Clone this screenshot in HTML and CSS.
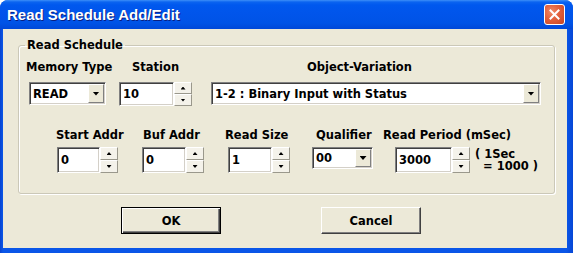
FILE: index.html
```html
<!DOCTYPE html>
<html lang="en">
<head>
  <meta charset="UTF-8">
  <title>Read Schedule Add/Edit</title>
  <link rel="stylesheet" href="styles.css">
</head>
<body>
  <div class="window">
    <!-- Title bar -->
    <div class="titlebar">
      <span class="title">Read Schedule Add/Edit</span>
      <button class="close-btn" aria-label="Close">
        <svg width="11" height="11" viewBox="0 0 11 11">
          <path d="M1.5 1.5 L9.5 9.5 M9.5 1.5 L1.5 9.5" stroke="#fff" stroke-width="2" stroke-linecap="square"/>
        </svg>
      </button>
    </div>

    <div class="client">
      <fieldset class="group">
        <legend>Read Schedule</legend>

        <!-- Row 1 -->
        <div class="row row-top">
          <div class="field f-mem">
            <label>Memory Type</label>
            <div class="combo combo-mem">
              <span class="combo-text">READ</span>
              <span class="drop-btn"><span class="arrow-down"></span></span>
            </div>
          </div>

          <div class="field f-station">
            <label>Station</label>
            <div class="spin-edit">
              <div class="edit edit-station">10</div>
              <div class="spin">
                <span class="spin-btn"><span class="arrow-up"></span></span>
                <span class="spin-btn"><span class="arrow-dn"></span></span>
              </div>
            </div>
          </div>

          <div class="field f-objvar">
            <label>Object-Variation</label>
            <div class="combo combo-objvar">
              <span class="combo-text">1-2 : Binary Input with Status</span>
              <span class="drop-btn"><span class="arrow-down"></span></span>
            </div>
          </div>
        </div>

        <!-- Row 2 -->
        <div class="row row-bottom">
          <div class="field f-start">
            <label>Start Addr</label>
            <div class="spin-edit">
              <div class="edit edit-43">0</div>
              <div class="spin">
                <span class="spin-btn"><span class="arrow-up"></span></span>
                <span class="spin-btn"><span class="arrow-dn"></span></span>
              </div>
            </div>
          </div>

          <div class="field f-buf">
            <label>Buf Addr</label>
            <div class="spin-edit">
              <div class="edit edit-44">0</div>
              <div class="spin">
                <span class="spin-btn"><span class="arrow-up"></span></span>
                <span class="spin-btn"><span class="arrow-dn"></span></span>
              </div>
            </div>
          </div>

          <div class="field f-size">
            <label>Read Size</label>
            <div class="spin-edit">
              <div class="edit edit-44">1</div>
              <div class="spin">
                <span class="spin-btn"><span class="arrow-up"></span></span>
                <span class="spin-btn"><span class="arrow-dn"></span></span>
              </div>
            </div>
          </div>

          <div class="field f-qual">
            <label>Qualifier</label>
            <div class="combo combo-qual">
              <span class="combo-text">00</span>
              <span class="drop-btn"><span class="arrow-down"></span></span>
            </div>
          </div>

          <div class="field f-period">
            <label>Read Period (mSec)</label>
            <div class="period-line">
              <div class="spin-edit">
                <div class="edit edit-57">3000</div>
                <div class="spin">
                  <span class="spin-btn"><span class="arrow-up"></span></span>
                  <span class="spin-btn"><span class="arrow-dn"></span></span>
                </div>
              </div>
              <span class="note">( 1Sec
  = 1000 )</span>
            </div>
          </div>
        </div>
      </fieldset>

      <div class="buttons">
        <button class="btn btn-default">OK</button>
        <button class="btn">Cancel</button>
      </div>
    </div>
  </div>
</body>
</html>
```

FILE: styles.css
```css
:root {
  --face: #ece9d8;
  --frame: #0a52e4;
  --text: #000000;
  --shadow: #808080;
  --dark: #404040;
}

body {
  margin: 0;
  font-family: "DejaVu Sans", sans-serif;
  font-size: 11.5px;
  font-weight: bold;
  color: var(--text);
  background: #ffffff;
}

/* Window frame */
.window {
  width: 573px;
  height: 253px;
  box-sizing: border-box;
  display: flex;
  flex-direction: column;
  padding: 0 6px 5px 3px;
  background: linear-gradient(to right, #0843d0 0, #0a56e8 3px, #0a56e8 566px, #0747d6 100%);
  border-radius: 8px 8px 0 0;
}

.titlebar {
  height: 29px;
  flex: none;
  display: flex;
  align-items: center;
  justify-content: space-between;
  margin: 0 -6px 0 -3px;
  padding: 0 9px 0 7px;
  border-radius: 8px 8px 0 0;
  background: linear-gradient(to bottom, #3d8ff8 0, #0b64f0 2px, #0058ee 5px, #0155eb 45%, #0053e6 80%, #0048d8 100%);
}

.title {
  font-family: "Liberation Sans", Arial, sans-serif;
  font-size: 15px;
  font-weight: bold;
  color: #ffffff;
  text-shadow: 1px 1px 0 #0a1e80;
}

.close-btn {
  width: 21px;
  height: 21px;
  padding: 0;
  margin-right: -1px;
  display: flex;
  align-items: center;
  justify-content: center;
  border: 1px solid #ffffff;
  border-radius: 3px;
  background: radial-gradient(circle at 35% 35%, #f08a68 0, #e2603c 45%, #c54422 100%);
}

.client {
  flex: 1;
  background: var(--face);
  padding: 9px 12px 0 15px;
}

/* Group box */
.group {
  margin: 0;
  padding: 0 0 20px 6px;
  min-width: 0;
  border: 1px solid #cbc8b8;
  border-radius: 3px;
  box-shadow: inset 1px 1px 0 #ffffff, 1px 1px 0 #ffffff;
}

.group legend {
  padding: 0 2px;
  line-height: 14px;
}

.row {
  display: flex;
  align-items: flex-start;
}

.row-top {
  margin-top: 8px;
}

.row-bottom {
  margin-top: 22px;
}

.field label {
  display: block;
  line-height: 14px;
  white-space: nowrap;
}

.row-top .field label {
  margin-bottom: 8px;
}

.row-bottom .field label {
  margin-bottom: 5px;
}

/* Row 1 columns */
.f-mem { margin-left: 1px; width: 93px; }
.f-mem .combo { margin-left: 3px; }
.f-station label { margin-left: 13px; }
.f-objvar { margin-left: 19px; }
.f-objvar label { margin-left: 96px; }

/* Row 2 columns */
.f-start { margin-left: 31px; width: 86px; }
.f-start .spin-edit { margin-left: 1px; }
.f-buf { width: 83px; }
.f-buf label { margin-left: 1px; }
.f-size { width: 87px; }
.f-size .spin-edit { margin-left: 3px; }
.f-qual { width: 71px; }
.f-qual label { margin-left: 4px; }
.f-qual .combo { margin-top: 3px; }
.f-period .period-line { margin-left: 12px; }

/* Sunken edit box */
.edit {
  box-sizing: border-box;
  background: #ffffff;
  border: 1px solid;
  border-color: var(--shadow) #ffffff #ffffff var(--shadow);
  box-shadow: inset 1px 1px 0 var(--dark), inset -1px -1px 0 #d4d0c8;
  padding-left: 3px;
  display: flex;
  align-items: center;
}

.spin-edit {
  display: flex;
}

.row-top .edit { height: 24px; }
.row-bottom .edit { height: 26px; }

.edit-station { width: 55px; }
.edit-43 { width: 43px; }
.edit-44 { width: 44px; }
.edit-57 { width: 57px; }

.spin {
  width: 18px;
  display: flex;
  flex-direction: column;
}

.spin-btn {
  flex: 1;
  display: flex;
  align-items: center;
  justify-content: center;
  background: #f4f2ea;
  border: 1px solid;
  border-color: #ffffff #9a988c #9a988c #ffffff;
}

.arrow-up,
.arrow-dn {
  width: 5px;
  height: 3px;
  background: #000000;
}

.arrow-up { clip-path: polygon(50% 0, 100% 100%, 0 100%); }
.arrow-dn { clip-path: polygon(0 0, 100% 0, 50% 100%); }

/* Combo box */
.combo {
  box-sizing: border-box;
  height: 23px;
  display: flex;
  align-items: stretch;
  background: #ffffff;
  border: 1px solid;
  border-color: var(--shadow) #ffffff #ffffff var(--shadow);
  box-shadow: inset 1px 1px 0 var(--dark), inset -1px -1px 0 #d4d0c8;
  padding: 1px;
}

.combo-text {
  flex: 1;
  display: flex;
  align-items: center;
  padding-left: 2px;
  white-space: nowrap;
  overflow: hidden;
}

.drop-btn {
  width: 16px;
  box-sizing: border-box;
  display: flex;
  align-items: center;
  justify-content: center;
  background: #ece9d8;
  border: 1px solid;
  border-color: #ffffff #808080 #808080 #ffffff;
}

.arrow-down {
  width: 7px;
  height: 4px;
  background: #000000;
  clip-path: polygon(0 0, 100% 0, 50% 100%);
}

.combo-mem { width: 77px; }
.combo-objvar { width: 330px; }
.combo-qual { width: 61px; height: 22px; }

.period-line {
  display: flex;
  align-items: center;
}

.note {
  white-space: pre;
  line-height: 12px;
  margin-left: 5px;
}

/* Dialog buttons */
.buttons {
  display: flex;
  gap: 100px;
  margin-top: 13px;
  padding-left: 103px;
}

.btn {
  width: 100px;
  height: 27px;
  font-family: inherit;
  font-size: 11.5px;
  font-weight: bold;
  color: #000000;
  background: var(--face);
  border: 1px solid;
  border-color: #ffffff var(--dark) var(--dark) #ffffff;
  box-shadow: inset -1px -1px 0 var(--shadow);
  padding: 0;
}

.btn-default {
  border: 1px solid #000000;
  box-shadow: inset 1px 1px 0 #ffffff, inset -1px -1px 0 var(--dark), inset -2px -2px 0 var(--shadow);
}
```
